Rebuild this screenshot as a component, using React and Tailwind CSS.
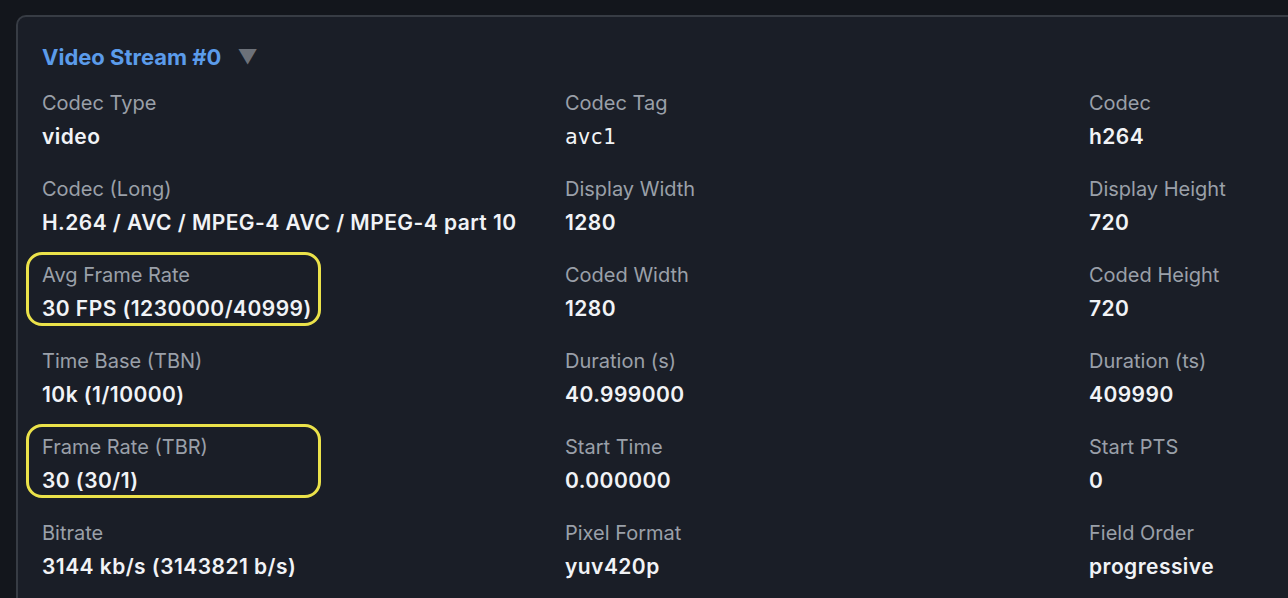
import { useState } from "react";

const fields = [
  ["Codec Type", "video"],
  ["Codec Tag", "avc1", "mono"],
  ["Codec", "h264"],
  ["Codec (Long)", "H.264 / AVC / MPEG-4 AVC / MPEG-4 part 10"],
  ["Display Width", "1280"],
  ["Display Height", "720"],
  ["Avg Frame Rate", "30 FPS (1230000/40999)", "hl"],
  ["Coded Width", "1280"],
  ["Coded Height", "720"],
  ["Time Base (TBN)", "10k (1/10000)"],
  ["Duration (s)", "40.999000"],
  ["Duration (ts)", "409990"],
  ["Frame Rate (TBR)", "30 (30/1)", "hl"],
  ["Start Time", "0.000000"],
  ["Start PTS", "0"],
  ["Bitrate", "3144 kb/s (3143821 b/s)"],
  ["Pixel Format", "yuv420p"],
  ["Field Order", "progressive"],
];

function Field({ label, value, kind }) {
  return (
    <div className="relative">
      {kind === "hl" && (
        <div className="absolute left-[-16px] top-[-7px] w-[295px] h-[74px] rounded-[16px] border-[3px] border-[#ebe24a] pointer-events-none" />
      )}
      <div className="text-[20px] leading-[32px] text-[#9aa0a9]">{label}</div>
      <div
        className={
          kind === "mono"
            ? "text-[21px] leading-[36px] text-[#f1f3f6] font-['DejaVu_Sans_Mono',monospace]"
            : "text-[21px] leading-[36px] tracking-[0.45px] text-[#f1f3f6] font-semibold"
        }
      >
        {value}
      </div>
    </div>
  );
}

export default function App() {
  const [open, setOpen] = useState(true);
  return (
    <div className="w-[1288px] h-[598px] overflow-hidden bg-[#13161c] pt-[15px] pl-[16px] font-['Inter','Noto_Sans',sans-serif]">
      <div className="w-[1640px] min-h-[640px] rounded-[10px] border-2 border-[#373c44] bg-[#1a1e27] pl-[24px] pt-[23px]">
        <button onClick={() => setOpen(!open)} className="flex items-center gap-[16px] h-[34px]">
          <span className="text-[22px] font-bold text-[#5b9bea]">Video Stream #0</span>
          <span className="text-[#6c7179] text-[20px] leading-none">▼</span>
        </button>
        {open && (
          <div className="grid grid-cols-[523px_524px_1fr] gap-y-[18px] mt-[13px]">
            {fields.map(([l, v, k]) => (
              <Field key={l} label={l} value={v} kind={k} />
            ))}
          </div>
        )}
      </div>
    </div>
  );
}
